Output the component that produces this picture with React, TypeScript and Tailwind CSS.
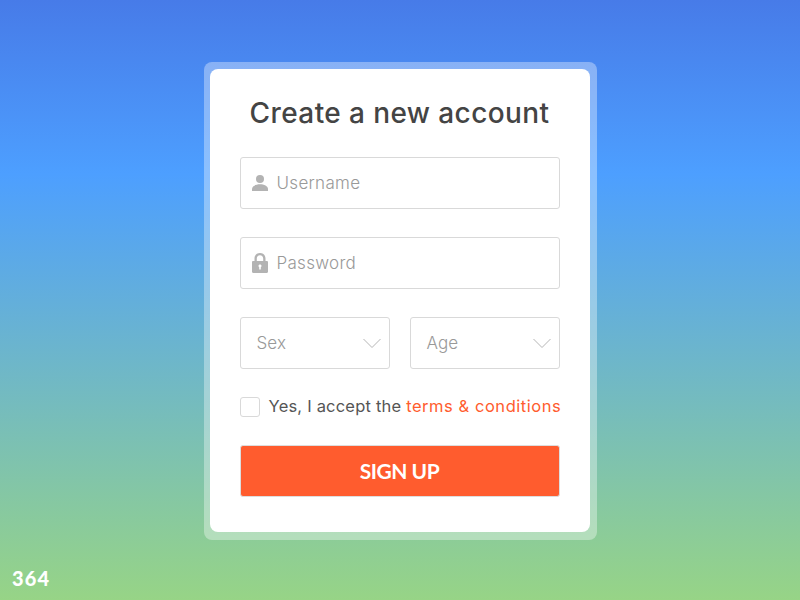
import React from "react";

const Chevron = () => (
  <svg width="18" height="10" viewBox="0 0 18 10" fill="none" stroke="#b5b5b5" strokeWidth="1">
    <path d="M0.5 1 L9 9.5 L17.5 1" />
  </svg>
);

const User = () => (
  <svg width="16" height="17" viewBox="0 0 16 17" fill="#b3b3b3">
    <circle cx="8" cy="4" r="4" />
    <path d="M0 16 V14 C0 11 4 9.3 8 9.3 C12 9.3 16 11 16 14 V16 Z" />
  </svg>
);

const Lock = () => (
  <svg width="16" height="20" viewBox="0 0 16 20" fill="#b3b3b3">
    <path fillRule="evenodd" d="M8 0 C4.6 0 2.5 2.4 2.5 5.5 V8 H1.2 C0.5 8 0 8.5 0 9.2 V18.8 C0 19.5 0.5 20 1.2 20 H14.8 C15.5 20 16 19.5 16 18.8 V9.2 C16 8.5 15.5 8 14.8 8 H13.5 V5.5 C13.5 2.4 11.4 0 8 0 Z M8 2.2 C10 2.2 11.2 3.6 11.2 5.6 V8 H4.8 V5.6 C4.8 3.6 6 2.2 8 2.2 Z M8 11.5 C7.1 11.5 6.5 12.1 6.5 12.9 C6.5 13.5 6.8 13.9 7.2 14.2 V16.5 H8.8 V14.2 C9.2 13.9 9.5 13.5 9.5 12.9 C9.5 12.1 8.9 11.5 8 11.5 Z" />
  </svg>
);

function Field({ icon, label }: { icon: React.ReactNode; label: string }) {
  return (
    <div className="h-[52px] rounded-[3px] border border-[#d9d9d9] bg-white flex items-center pl-[11px]">
      <div className="w-[16px] flex justify-center">{icon}</div>
      <span className="ml-[9px] pt-[2px] text-[17px] font-light tracking-[0.3px] text-[#999999]">{label}</span>
    </div>
  );
}

function Select({ label }: { label: string }) {
  return (
    <div className="h-[52px] flex-1 rounded-[3px] border border-[#d9d9d9] bg-white flex items-center justify-between pl-[16px] pr-[8px]">
      <span className="pt-[2px] text-[17px] font-light tracking-[0.1px] text-[#999999]">{label}</span>
      <Chevron />
    </div>
  );
}

export default function App() {
  return (
    <div
      className="relative h-[600px] w-[800px] overflow-hidden flex justify-center pt-[62px] bg-[linear-gradient(180deg,#477be8_0%,#4d9fff_29%,#97d486_100%)]"
      style={{ fontFamily: '"Inter", "Open Sans", sans-serif' }}
    >
      <div className="h-[478px] w-[393px] rounded-[8px] bg-white/35 pl-[6px] pr-[7px] pt-[7px] pb-[8px]">
        <div className="h-full rounded-[8px] bg-white px-[30px] pt-[26px]">
          <h1 className="text-center text-[28px] leading-[36px] font-medium tracking-[0.4px] text-[#444444]">Create a new account</h1>
          <div className="mt-[26px] flex flex-col gap-[28px]">
            <Field icon={<User />} label="Username" />
            <Field icon={<Lock />} label="Password" />
            <div className="flex gap-[20px]">
              <Select label="Sex" />
              <Select label="Age" />
            </div>
          </div>
          <div className="mt-[28px] flex items-center h-[20px]">
            <div className="h-[20px] w-[20px] shrink-0 rounded-[3px] border border-[#d9d9d9]" />
            <span className="ml-[9px] -mt-[2px] whitespace-nowrap text-[16.5px] leading-[18px] tracking-[0.2px] text-[#555555]">
              Yes, I accept the <span className="tracking-[0.55px] text-[#ff5c2e]">terms &amp; conditions</span>
            </span>
          </div>
          <button className="mt-[28px] block h-[52px] w-full rounded-[3px] border border-[#dddddd] bg-[#ff5c2e] text-center text-[21px] font-bold tracking-[-0.5px] text-white" style={{ fontFamily: '"Lato", sans-serif' }}>
            SIGN UP
          </button>
        </div>
      </div>
      <div className="absolute left-[12px] bottom-[10px] text-[20px] leading-[24px] font-black tracking-[1.2px] text-white" style={{ fontFamily: '"Lato", sans-serif' }}>364</div>
    </div>
  );
}
